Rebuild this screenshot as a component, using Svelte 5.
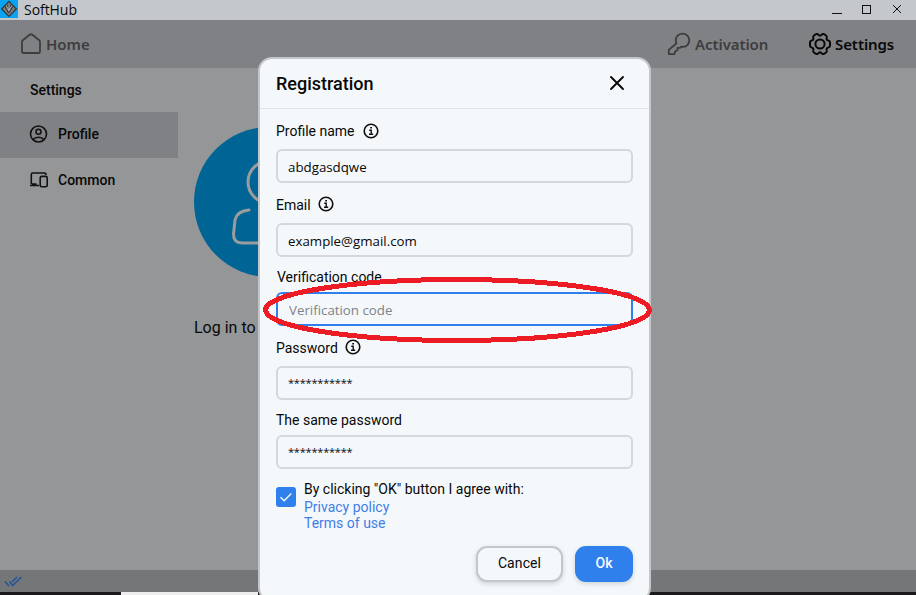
<script>
  let name = $state('abdgasdqwe');
  let email = $state('example@gmail.com');
</script>

{#snippet info()}
  <svg class="info" width="16" height="16" viewBox="0 0 16 16" fill="none" stroke="#111" stroke-width="1.6">
    <circle cx="8" cy="8" r="6.8" /><path d="M6.2 7.2H8.2V11M6 11.2H10.2" stroke-width="1.4" /><path d="M7.2 4.8H9" stroke-width="1.6" />
  </svg>
{/snippet}

<div class="window">
  <header class="titlebar">
    <svg width="18" height="18" viewBox="0 0 18 18"><rect width="18" height="18" fill="#08a4f2" /><path d="M9 1.4 16.4 9 9 16.4 1.6 9Z" fill="#777a7d" stroke="#30373b" stroke-width="1.2" /><path d="M5 6.2 8.3 12.5 9.2 12.5 13 6.2M7.5 5.2V8.2M10.5 5V8.3" fill="none" stroke="#292e31" stroke-width="1" /><path d="M6.5 5.8 8.9 10.5 11.5 5.8" fill="none" stroke="#c2c2c0" stroke-width=".8" /></svg>
    <span class="brand">SoftHub</span>
    <svg class="controls" width="72" height="20" viewBox="0 0 72 20" fill="none" stroke="#111" shape-rendering="crispEdges"><path d="M0 13.5H10" /><rect x="30.5" y="5.5" width="8" height="8" /><path d="M61 5 69 13M69 5 61 13" shape-rendering="auto" /></svg>
  </header>

  <nav class="topnav">
    <a class="home"><svg width="22" height="22" viewBox="0 0 22 22" fill="none" stroke="#3d3d3e" stroke-width="1.8" stroke-linejoin="round"><path d="M2 9.1Q2 8 2.8 7.3L9.6 1.8Q11 .7 12.4 1.8L19.2 7.3Q20 8 20 9.1V18.2Q20 20 18.2 20H3.8Q2 20 2 18.2Z" /></svg><span>Home</span></a>
    <a class="activation"><svg width="24" height="24" viewBox="0 0 24 24" fill="none" stroke="#3d3d3e" stroke-width="1.8" stroke-linejoin="round"><path d="M1.8 22.1V17.9L9.3 11.5Q7.8 6.4 10.6 3.7C13.1 1 17.2.9 20 3.2C22.8 5.8 23 10.1 20.6 12.8Q18 15.6 14.1 14.6L13.2 15.8H10.5V18.1L8.3 19.3L7.3 22.1Z" /></svg><span>Activation</span></a>
    <a class="options"><svg width="24" height="24" viewBox="0 0 24 24" fill="none" stroke="#080808" stroke-width="2" stroke-linejoin="round"><path d="M8.1 2.2Q9.4 1.5 10.5 2.9Q12 4.4 13.5 2.9Q14.6 1.5 15.9 2.2L18.1 3.5Q19.2 4.2 18.7 5.7Q18.1 7.8 20.2 8.4Q22 8.8 22 10.2V13.8Q22 15.2 20.2 15.6Q18.1 16.2 18.7 18.3Q19.2 19.8 18.1 20.5L15.9 21.8Q14.6 22.5 13.5 21.1Q12 19.6 10.5 21.1Q9.4 22.5 8.1 21.8L5.9 20.5Q4.8 19.8 5.3 18.3Q5.9 16.2 3.8 15.6Q2 15.2 2 13.8V10.2Q2 8.8 3.8 8.4Q5.9 7.8 5.3 5.7Q4.8 4.2 5.9 3.5Z" /><circle cx="12" cy="12" r="4.6" /></svg><span>Settings</span></a>
  </nav>

  <main>
    <aside>
      <h2>Settings</h2>
      <a class="item active"><svg width="20" height="20" viewBox="0 0 20 20" fill="none" stroke="#111" stroke-width="1.6"><circle cx="9.5" cy="10" r="8" /><circle cx="9.5" cy="7.8" r="2.5" /><path d="M4.2 15.5Q6 13.2 9.5 13.2T14.8 15.5" /></svg>Profile</a>
      <a class="item"><svg width="20" height="20" viewBox="0 0 20 20" fill="none" stroke="#111" stroke-width="1.6"><path d="M17 5V4.5Q17 3 15.5 3H3.8Q2.3 3 2.3 4.5V14.2M1 15.5H10M3 14H7.5" /><rect x="11.2" y="6.4" width="7" height="10.4" rx="1.5" /></svg>Common</a>
    </aside>
    <section class="account">
      <svg width="150" height="150" viewBox="0 0 150 150"><circle cx="75" cy="75" r="75" fill="#006594" /><g fill="none" stroke="#9b9c9e" stroke-width="3" stroke-linecap="round"><circle cx="75" cy="55" r="21" /><path d="M55 83Q43 84 41 93L39.5 107Q39.5 116 48 116H102Q110 116 110 107L109 93Q107 84 95 83" /></g></svg>
      <p>Log in to</p>
    </section>
  </main>
  <footer class="status"><svg width="20" height="14" viewBox="0 0 20 14" fill="none" stroke="#20549b" stroke-width="1.5"><path d="M1 7.5 5 12M5.5 7.5 8.7 11.5 17.5 3M8 8 13 3" /></svg></footer>
  <div class="edge"><span></span></div>

  <div class="dialog">
    <div class="heading"><h1>Registration</h1><svg width="16" height="16" viewBox="0 0 16 16" stroke="#080808" stroke-width="1.9" stroke-linecap="round"><path d="M2 2 14 14M14 2 2 14" /></svg></div>
    <div class="fields">
      <label class="profile"><span>Profile name {@render info()}</span><input bind:value={name} /></label>
      <label class="email"><span>Email {@render info()}</span><input bind:value={email} /></label>
      <label class="code"><span>Verification code</span><input class="focused" placeholder="Verification code" /></label>
      <label class="password"><span>Password {@render info()}</span><input class="stars" value="***********" /></label>
      <label class="repeat"><span>The same password</span><input class="stars" value="***********" /></label>
    </div>
    <div class="agreement">
      <svg width="20" height="20" viewBox="0 0 20 20"><rect width="20" height="20" rx="3" fill="#2f80ed" /><path d="M4.5 10.2 8.2 13.8 15.3 6.5" stroke="#f5f8fb" stroke-width="1.4" fill="none" /></svg>
      <div><p>By clicking "OK" button I agree with:</p><a>Privacy policy</a><a>Terms of use</a></div>
    </div>
    <div class="buttons"><button class="cancel">Cancel</button><button class="ok">Ok</button></div>
  </div>
  <svg class="highlight" width="390" height="68" viewBox="0 0 390 68" fill="none" stroke="#ed1c24" shape-rendering="crispEdges"><ellipse cx="194.5" cy="34" rx="192" ry="30.5" stroke-width="5" /></svg>
</div>

<style>
  :global(body) { overflow: hidden; }
  * { box-sizing: border-box; }
  svg { display: block; flex: none; }
  .window { position: relative; width: 916px; height: 595px; overflow: hidden; display: flex; flex-direction: column; background: #959698; color: #080808; font: 14px/20px Roboto, "Liberation Sans", sans-serif; }
  .titlebar { height: 20px; flex: none; display: flex; background: #c4c8cc; }
  .brand { width: 814px; padding-left: 6px; font: 14px/20px "Open Sans", sans-serif; letter-spacing: -.05px; }
  .topnav { height: 48px; flex: none; display: flex; align-items: center; background: #808184; padding-left: 20px; }
  .topnav a { display: flex; align-items: center; font: 600 15px/20px "Noto Sans", sans-serif; color: #3d3d3e; white-space: nowrap; }
  .home { width: 647px; gap: 4px; }
  .activation { width: 141px; gap: 4px; }
  .activation span, .options span { letter-spacing: -.08px; }
  .topnav .options { gap: 3px; color: #080808; }
  main { height: 502px; flex: none; display: flex; }
  aside { width: 178px; padding-top: 12px; }
  h2 { margin: 0; padding-left: 30px; height: 32px; font: 500 14px/20px Roboto, sans-serif; }
  .item { height: 46px; padding: 0 0 2px 29px; display: flex; align-items: center; gap: 9px; font-weight: 500; }
  .active { background: #808184; }
  .account { padding: 59px 0 0 16px; }
  .account p { margin: 42px 0 0; font-size: 16px; line-height: 18px; }
  .status { flex: none; height: 22px; background: #757678; padding: 4px 0 0 4px; }
  .edge { flex: none; height: 3px; background: #1c191c; display: flex; padding-left: 121px; }
  .edge span { width: 137px; background: #eee; }
  .dialog { position: absolute; left: 258px; top: 57px; width: 393px; height: 545px; background: #f4f8fb; border: 2px solid #c3c6cb; border-radius: 14px; }
  .heading { height: 50px; display: flex; align-items: center; justify-content: space-between; padding: 0 24px 0 16px; border-bottom: 1px solid #dfe4e8; }
  .heading svg { margin-bottom: 2px; }
  h1 { margin: 0; font: 500 18px/24px Roboto, sans-serif; }
  .fields { padding: 11px 16px 0; }
  label { display: flex; flex-direction: column; }
  label > span { display: flex; align-items: center; gap: 8px; height: 22px; }
  .info { margin-bottom: 1px; }
  .email .info, .password .info { margin-left: -1px; }
  .email .info { margin-bottom: 2px; }
  label input { margin-top: 7px; }
  .email { padding-top: 11px; }
  .code { padding-top: 9px; }
  .code > span { padding-left: 1px; }
  .code input { margin-top: 4px; }
  .password { padding-top: 11px; }
  .password input { margin-top: 8px; }
  .repeat { padding-top: 9px; }
  .repeat input { margin-top: 4px; }
  .password > span { height: 21px; }
  input { width: 357px; height: 34px; border: 2px solid #d4d8dc; border-radius: 6px; padding: 2px 10px 0; background: transparent; outline: none; color: #080808; font: 13.3px/18px "Open Sans", sans-serif; }
  input.focused { border-color: #2f80ed; padding-left: 11px; }
  input::placeholder { color: #808386; opacity: 1; }
  input.stars { padding: 0 10px 1px; font: 11px/18px "Open Sans", sans-serif; letter-spacing: -.2px; }
  .agreement { display: flex; gap: 8px; padding: 10px 16px 0; }
  .agreement > svg { margin-top: 8px; }
  .agreement p { margin: 0; line-height: 20px; }
  .agreement a { display: block; color: #3f7ee8; line-height: 16px; }
  .buttons { display: flex; justify-content: flex-end; gap: 12px; padding: 15px 16px 0 0; }
  button { height: 36px; border-radius: 11px; font: 500 14px/20px Roboto, sans-serif; padding: 0 0 2px; box-shadow: 0 2px 5px #00000026; }
  .cancel { width: 87px; border: 2px solid #c3c6cb; background: #f4f8fb; color: #080808; font-weight: 400; letter-spacing: .1px; }
  .ok { width: 58px; border: 0; color: #f7faff; background: #2f80ed; }
  .highlight { position: absolute; left: 263px; top: 276px; }
</style>
